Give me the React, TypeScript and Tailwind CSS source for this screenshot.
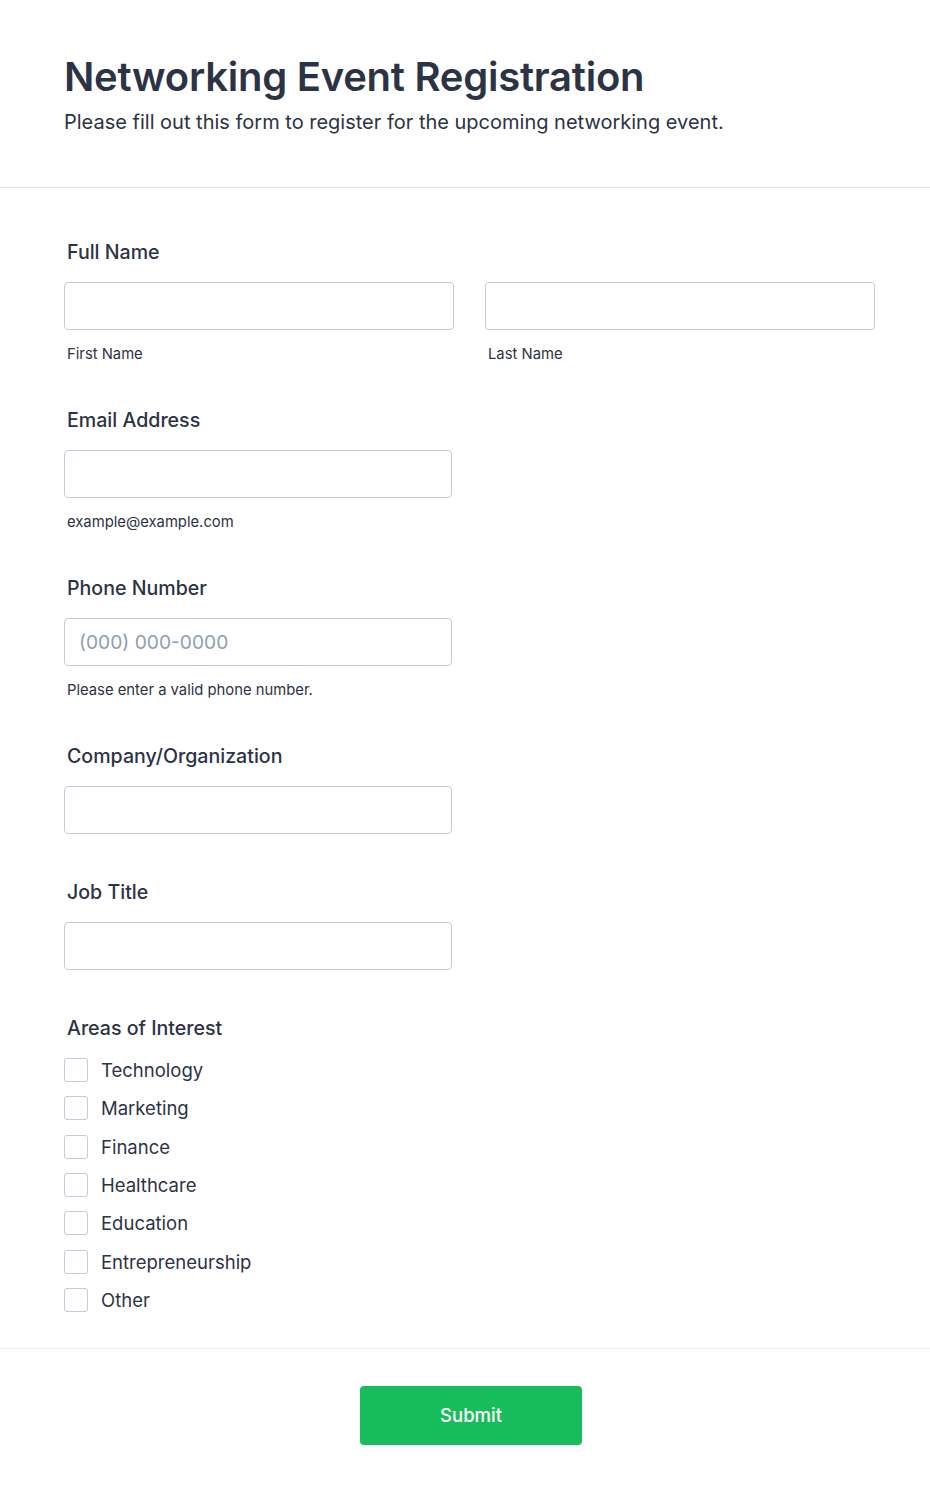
import React from 'react';

const interests = ['Technology', 'Marketing', 'Finance', 'Healthcare', 'Education', 'Entrepreneurship', 'Other'];

function Label({ children }: { children: React.ReactNode }) {
  return <label className="block text-[19.6px] leading-[24px] font-medium text-[#2c3345] pl-[3px]">{children}</label>;
}

function Input({ placeholder = '', wide = false }: { placeholder?: string; wide?: boolean }) {
  return (
    <input
      type="text"
      placeholder={placeholder}
      className={`${wide ? 'w-full' : 'w-[388px]'} h-[48px] px-[14px] bg-white border border-[#c3cad8] rounded-[4px] text-[19.2px] text-[#2c3345] placeholder:text-[#8f9db3] outline-none`}
    />
  );
}

function Sub({ children }: { children: React.ReactNode }) {
  return <p className="mt-[14px] text-[14.8px] leading-[20px] text-[#2c3345] pl-[3px]">{children}</p>;
}

export default function App() {
  return (
    <div className="min-h-[1495px] w-[930px] bg-white text-[#2c3345]" style={{ fontFamily: 'Inter, "Noto Sans", sans-serif' }}>
      {/* Header */}
      <div className="pl-[64px] pt-[53px] pb-[51px] border-b border-[#dcdbec]">
        <h1 className="text-[40px] leading-[48px] font-semibold tracking-[-0.25px] text-[#2c3345]">Networking Event Registration</h1>
        <p className="mt-[7px] text-[20px] leading-[28px] text-[#2c3345]">
          Please fill out this form to register for the upcoming networking event.
        </p>
      </div>

      {/* Form fields */}
      <div className="pl-[64px] pr-[55px] pt-[52px] pb-[34px] border-b border-[#eaebf2]">
        <div>
          <Label>Full Name</Label>
          <div className="mt-[18px] grid grid-cols-2 gap-[31px]">
            <div>
              <Input wide />
              <Sub>First Name</Sub>
            </div>
            <div>
              <Input wide />
              <Sub>Last Name</Sub>
            </div>
          </div>
        </div>

        <div className="mt-[44px]">
          <Label>Email Address</Label>
          <div className="mt-[18px]">
            <Input />
            <Sub>example@example.com</Sub>
          </div>
        </div>

        <div className="mt-[44px]">
          <Label>Phone Number</Label>
          <div className="mt-[18px]">
            <Input placeholder="(000) 000-0000" />
            <Sub>Please enter a valid phone number.</Sub>
          </div>
        </div>

        <div className="mt-[44px]">
          <Label>Company/Organization</Label>
          <div className="mt-[18px]">
            <Input />
          </div>
        </div>

        <div className="mt-[46px]">
          <Label>Job Title</Label>
          <div className="mt-[18px]">
            <Input />
          </div>
        </div>

        <div className="mt-[46px]">
          <Label>Areas of Interest</Label>
          <div className="mt-[16px] flex flex-col gap-[10.33px]">
            {interests.map((item) => (
              <label key={item} className="flex items-center h-[28px] gap-[13px]">
                <span className="w-[24px] h-[24px] border border-[#c3cad8] rounded-[3px] bg-white shrink-0" />
                <span className="text-[18.5px] leading-[28px] text-[#2c3345]">{item}</span>
              </label>
            ))}
          </div>
        </div>
      </div>

      {/* Submit */}
      <div className="flex justify-center pt-[37px] pl-[12px]">
        <button className="w-[222px] h-[59px] bg-[#18bd5b] rounded-[4px] text-white text-[18.5px] font-medium">
          Submit
        </button>
      </div>
    </div>
  );
}
